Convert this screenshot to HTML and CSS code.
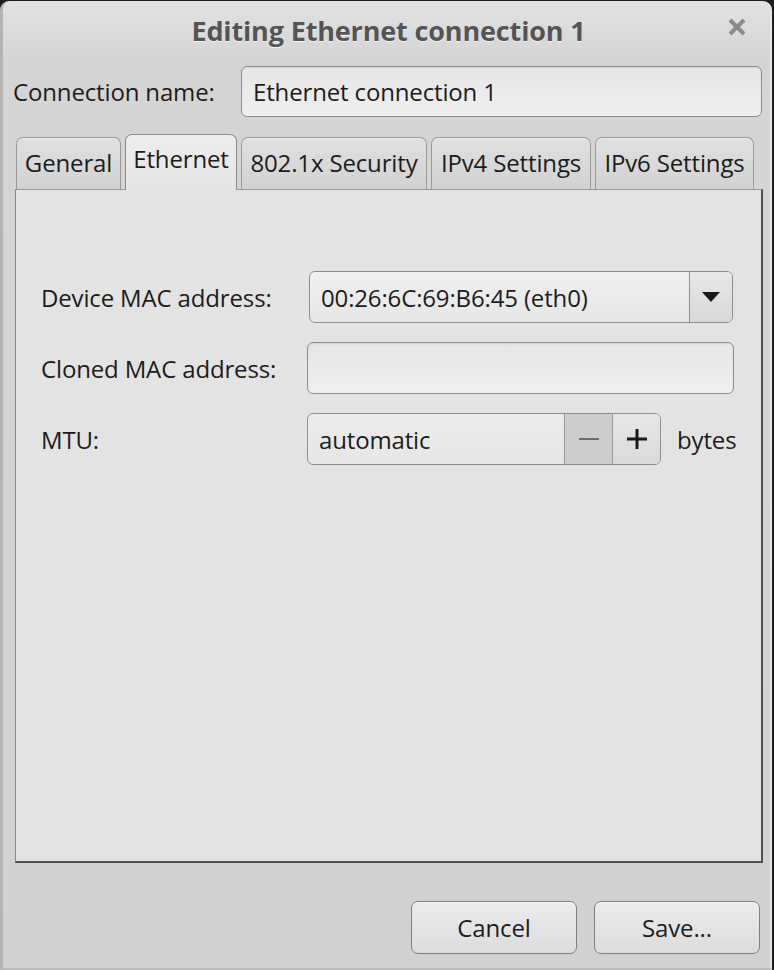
FILE: index.html
```html
<!DOCTYPE html>
<html>
<head>
<meta charset="utf-8">
<link rel="stylesheet" href="styles.css">
</head>
<body>
<div class="window">
  <div class="titlebar">
    <div class="title">Editing Ethernet connection 1</div>
    <div class="close">
      <svg width="20" height="20" viewBox="0 0 20 20"><path d="M3 3 L17 17 M17 3 L3 17" stroke="#8a8a8a" stroke-width="4" stroke-linecap="butt"/></svg>
    </div>
  </div>
  <div class="name-row">
    <span class="label name-label">Connection name:</span>
    <div class="entry name-entry">Ethernet connection 1</div>
  </div>
  <div class="tabs">
    <div class="tab t-general">General</div>
    <div class="tab active t-eth">Ethernet</div>
    <div class="tab t-sec">802.1x Security</div>
    <div class="tab t-v4">IPv4 Settings</div>
    <div class="tab t-v6">IPv6 Settings</div>
  </div>
  <div class="panel">
    <div class="form">
      <span class="label">Device MAC address:</span>
      <div class="combo">
        <div class="combo-text">00:26:6C:69:B6:45 (eth0)</div>
        <div class="combo-btn"><svg width="18" height="12" viewBox="0 0 18 12"><path d="M0 1 H18 L9 11 Z" fill="#1a1a1a"/></svg></div>
      </div>
      <span class="label">Cloned MAC address:</span>
      <div class="entry cloned"></div>
      <span class="label">MTU:</span>
      <div class="mtu-row">
        <div class="spin">
          <div class="spin-text">automatic</div>
          <div class="spin-btn minus"><svg width="24" height="24" viewBox="0 0 24 24"><path d="M2 12 H22" stroke="#6e6e6e" stroke-width="2"/></svg></div>
          <div class="spin-btn plus"><svg width="24" height="24" viewBox="0 0 24 24"><path d="M2 12 H22 M12 2 V22" stroke="#1a1a1a" stroke-width="3"/></svg></div>
        </div>
        <span class="label bytes">bytes</span>
      </div>
    </div>
  </div>
  <div class="actions">
    <button class="btn">Cancel</button>
    <button class="btn">Save...</button>
  </div>
</div>
</body>
</html>
```
FILE: styles.css
```css
html, body {
  margin: 0;
  padding: 0;
  background: #1e1e1e;
}
body {
  width: 774px;
  height: 970px;
  overflow: hidden;
  font-family: "Open Sans", "Noto Sans", sans-serif;
  color: #1c1c1c;
}
.window {
  box-sizing: border-box;
  width: 772px;
  height: 969px;
  margin-top: 1px;
  border-radius: 9px 9px 0 0;
  background: linear-gradient(#e2e1e1 0px, #d6d5d5 60px, #d2d1d1 100%);
  border-left: 3px solid #b4b4b4;
  border-right: 2px solid #e6e6e6;
  border-bottom: 2px solid #bcbcbc;
  display: flex;
  flex-direction: column;
}
.titlebar {
  height: 58px;
  display: flex;
  align-items: center;
  justify-content: center;
  position: relative;
}
.title {
  font-weight: 700;
  font-size: 27px;
  color: #545454;
  text-shadow: 0 1px 0 #f4f4f4;
  letter-spacing: -0.15px;
  margin-left: 4px;
}
.close {
  position: absolute;
  right: 23px;
  top: 16px;
  width: 20px;
  height: 20px;
}
.label {
  font-size: 24px;
  letter-spacing: -0.15px;
  color: #1c1c1c;
  white-space: nowrap;
}
.name-row {
  display: flex;
  align-items: center;
  padding-left: 10px;
  height: 62px;
  margin-top: 1px;
}
.name-label {
  width: 228px;
}
.entry {
  box-sizing: border-box;
  border: 1px solid #8e8e8e;
  border-radius: 6px;
  background: linear-gradient(#e6e6e6, #efefef);
  box-shadow: inset 0 1px 2px rgba(0,0,0,0.08);
  font-size: 24px;
  letter-spacing: -0.15px;
  display: flex;
  align-items: center;
  padding-left: 11px;
}
.name-entry {
  width: 521px;
  height: 51px;
}
.tabs {
  display: flex;
  align-items: flex-end;
  padding-left: 13px;
  gap: 4px;
  margin-top: 11px;
  height: 56px;
  position: relative;
  z-index: 1;
}
.tab {
  box-sizing: border-box;
  height: 52px;
  border: 1px solid #9a9a9a;
  border-bottom: none;
  border-radius: 7px 7px 0 0;
  background: linear-gradient(#e0e0e0, #d2d2d2);
  font-size: 24px;
  letter-spacing: -0.15px;
  display: flex;
  align-items: center;
  justify-content: center;
  padding-bottom: 3px;
  box-shadow: inset 0 1px 0 #f0f0f0;
}
.tab.active {
  height: 56px;
  background: linear-gradient(#eeeeee, #e4e4e4);
  padding-bottom: 8px;
  margin-bottom: -1px;
  border-color: #8a8a8a;
}
.t-general { width: 105px; }
.t-eth { width: 112px; }
.t-sec { width: 186px; }
.t-v4 { width: 160px; }
.t-v6 { width: 159px; }
.panel {
  box-sizing: border-box;
  margin-left: 12px;
  width: 748px;
  height: 674px;
  background: #e3e3e3;
  border-top: 1px solid #9a9a9a;
  border-left: 1px solid #888;
  border-right: 2px solid #4f4f4f;
  border-bottom: 2px solid #4f4f4f;
  padding: 81px 28px 0 25px;
}
.form {
  display: grid;
  grid-template-columns: 266px 427px;
  grid-auto-rows: 52px;
  row-gap: 19px;
  align-items: center;
}
.combo {
  box-sizing: border-box;
  height: 52px;
  width: 424px;
  margin-left: 2px;
  border: 1px solid #8e8e8e;
  border-radius: 6px;
  background: linear-gradient(#f0f0f0, #e6e6e6);
  display: flex;
  overflow: hidden;
}
.combo-text {
  flex: 1;
  display: flex;
  align-items: center;
  padding-left: 11px;
  font-size: 24px;
  letter-spacing: -0.15px;
}
.combo-btn {
  width: 42px;
  border-left: 1px solid #8e8e8e;
  background: linear-gradient(#e8e8e8, #d8d8d8);
  display: flex;
  align-items: center;
  justify-content: center;
}
.cloned {
  height: 52px;
  width: 427px;
}
.mtu-row {
  display: flex;
  align-items: center;
}
.spin {
  box-sizing: border-box;
  flex-shrink: 0;
  width: 354px;
  height: 52px;
  border: 1px solid #8e8e8e;
  border-radius: 6px;
  background: linear-gradient(#ececec, #e6e6e6);
  display: flex;
  overflow: hidden;
}
.spin-text {
  flex: 1;
  display: flex;
  align-items: center;
  padding-left: 11px;
  font-size: 24px;
  letter-spacing: -0.15px;
}
.spin-btn {
  width: 47px;
  display: flex;
  align-items: center;
  justify-content: center;
  border-left: 1px solid #9a9a9a;
}
.minus {
  background: #cdcdcd;
}
.plus {
  background: linear-gradient(#e6e6e6, #dadada);
}
.bytes {
  margin-left: 16px;
}
.actions {
  display: flex;
  justify-content: flex-end;
  gap: 17px;
  padding-right: 10px;
  margin-top: 38px;
}
.btn {
  box-sizing: border-box;
  width: 166px;
  height: 53px;
  border: 1px solid #7e7e7e;
  border-radius: 7px;
  background: linear-gradient(#ececec, #dcdcdc);
  box-shadow: inset 0 1px 0 #f8f8f8;
  font-family: "Open Sans", "Noto Sans", sans-serif;
  font-size: 24px;
  letter-spacing: -0.15px;
  color: #1c1c1c;
  padding: 0;
}
```
